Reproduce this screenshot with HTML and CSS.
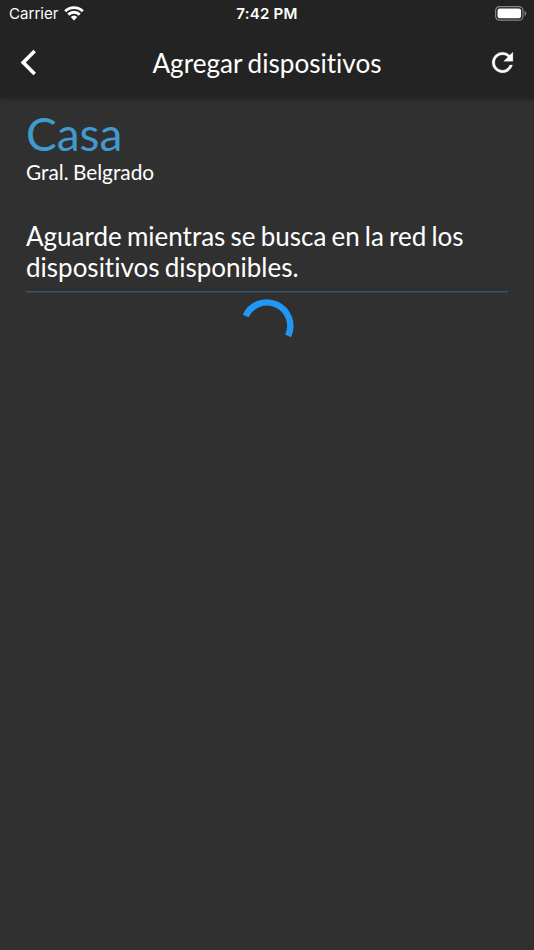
FILE: index.html
```html
<!DOCTYPE html>
<html lang="es">
<head>
<meta charset="utf-8">
<title>Agregar dispositivos</title>
<link rel="stylesheet" href="styles.css">
</head>
<body>
<header class="header">
  <div class="status">
    <div class="carrier"><span>Carrier</span>
      <svg class="wifi" width="20" height="15" viewBox="0 0 20 15"><g fill="none" stroke="#fff" stroke-width="2.9"><path d="M1.2 5.2a12.7 12.7 0 0 1 17.6 0"/><path d="M4.3 8.6a8.2 8.2 0 0 1 11.4 0"/></g><path d="M6.7 11a4.8 4.8 0 0 1 6.6 0L10 14.4z" fill="#fff"/></svg>
    </div>
    <div class="time">7:42 PM</div>
    <svg class="battery" width="32" height="15" viewBox="0 0 32 15"><rect x=".6" y=".6" width="27.4" height="13.6" rx="4" fill="none" stroke="#858585" stroke-width="1.2"/><rect x="2.5" y="2.5" width="23.6" height="9.8" rx="2.2" fill="#fff"/><path d="M29.6 5.1c2.3.8 2.3 4 0 4.8z" fill="#858585"/></svg>
  </div>
  <nav class="bar">
    <svg class="back" width="31" height="31" viewBox="0 0 24 24"><path fill="#fff" d="M17.8 4.1 15.8 2.1 5.9 12l9.9 9.9 2-2L9.9 12z"/></svg>
    <h1 class="title">Agregar dispositivos</h1>
    <svg class="refresh" width="31" height="31" viewBox="0 0 24 24"><path fill="#fff" stroke="#fff" stroke-width=".25" d="M17.65 6.35A7.95 7.95 0 0 0 12 4a8 8 0 1 0 7.73 10h-2.08A6 6 0 1 1 12 6c1.66 0 3.14.69 4.22 1.78L13 11h7V4z"/></svg>
  </nav>
</header>
<main class="content">
  <h2 class="place">Casa</h2>
  <p class="address">Gral. Belgrado</p>
  <p class="message">Aguarde mientras se busca en la red los dispositivos disponibles.</p>
  <svg class="spinner" width="54" height="54" viewBox="-27 -27 54 54"><path d="M-21.4-9A23.1 23.1 0 1 1 21.1 10.8" fill="none" stroke="#2196f3" stroke-width="6.4"/></svg>
</main>
</body>
</html>
```
FILE: styles.css
```css
* { box-sizing: border-box; margin: 0; }
body {
  min-height: 950px;
  background: #303030;
  color: #fff;
  font-family: Lato, sans-serif;
  font-variant-ligatures: none;
}
.header {
  height: 98px;
  background: #232323;
  box-shadow: 0 1px 4px rgba(0, 0, 0, .35);
}
.status {
  display: grid;
  grid-template-columns: 1fr auto 1fr;
  align-items: center;
  height: 27px;
  padding: 0 7px 0 9px;
  font-family: Inter, sans-serif;
  font-size: 15.1px;
}
.carrier { display: flex; align-items: center; gap: 6px; }
.time {
  margin-right: 2px;
  font-weight: 600;
  letter-spacing: .2px;
  line-height: 18px;
  padding-top: 1px;
}
.battery { justify-self: end; }
.bar {
  display: flex;
  align-items: center;
  justify-content: space-between;
  height: 71px;
  padding: 0 16px 0 13px;
}
.title {
  margin-left: 3px;
  padding-top: 1px;
  font-size: 26.1px;
  font-weight: 400;
  line-height: 31px;
  word-spacing: -1px;
}
.content {
  display: flex;
  flex-direction: column;
  padding: 8px 26px 0;
}
.place { font-size: 46px; font-weight: 400; line-height: 56px; color: #4199cd; }
.address { font-size: 20.8px; line-height: 25px; margin-top: -3px; word-spacing: -1px; }
.message {
  margin-top: 37px;
  padding-bottom: 8px;
  border-bottom: 1px solid #34586f;
  box-shadow: 0 1px #324049;
  font-size: 26px;
  line-height: 31px;
  word-spacing: -1.5px;
}
.spinner { align-self: center; margin-top: 6px; }
```
